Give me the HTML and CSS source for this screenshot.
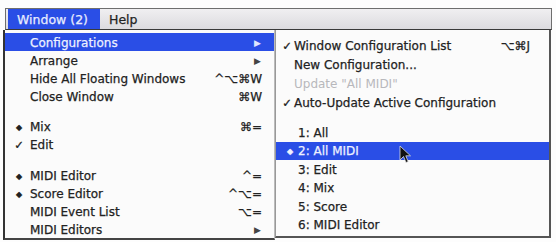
FILE: index.html
```html
<!DOCTYPE html>
<html>
<head>
<meta charset="utf-8">
<link rel="stylesheet" href="styles.css">
</head>
<body>
<div class="screen">
  <div class="bar">
    <span class="title active">Window (2)</span>
    <span class="title">Help</span>
  </div>
  <div class="menus">
    <div class="menu left">
      <div class="item hl"><span class="mark"></span><span class="label">Configurations</span><span class="key arrow">▶</span></div>
      <div class="item"><span class="mark"></span><span class="label">Arrange</span><span class="key arrow">▶</span></div>
      <div class="item"><span class="mark"></span><span class="label">Hide All Floating Windows</span><span class="key">^⌥⌘W</span></div>
      <div class="item"><span class="mark"></span><span class="label">Close Window</span><span class="key">⌘W</span></div>
      <div class="sep"></div>
      <div class="item"><span class="mark dia">◆</span><span class="label">Mix</span><span class="key">⌘=</span></div>
      <div class="item"><span class="mark">✓</span><span class="label">Edit</span><span class="key"></span></div>
      <div class="sep sep2"></div>
      <div class="item"><span class="mark dia">◆</span><span class="label">MIDI Editor</span><span class="key">^=</span></div>
      <div class="item"><span class="mark dia">◆</span><span class="label">Score Editor</span><span class="key">^⌥=</span></div>
      <div class="item"><span class="mark"></span><span class="label">MIDI Event List</span><span class="key">⌥=</span></div>
      <div class="item"><span class="mark"></span><span class="label">MIDI Editors</span><span class="key arrow">▶</span></div>
    </div>
    <div class="menu right">
      <div class="item tall"><span class="mark">✓</span><span class="label">Window Configuration List</span><span class="key">⌥⌘J</span></div>
      <div class="item tall"><span class="mark"></span><span class="label">New Configuration...</span><span class="key"></span></div>
      <div class="item tall dis"><span class="mark"></span><span class="label">Update "All MIDI"</span><span class="key"></span></div>
      <div class="item tall"><span class="mark">✓</span><span class="label">Auto-Update Active Configuration</span><span class="key"></span></div>
      <div class="sep"></div>
      <div class="item num"><span class="mark"></span><span class="label">1: All</span></div>
      <div class="item num hl"><span class="mark dia">◆</span><span class="label">2: All MIDI</span></div>
      <div class="item num"><span class="mark"></span><span class="label">3: Edit</span></div>
      <div class="item num"><span class="mark"></span><span class="label">4: Mix</span></div>
      <div class="item num"><span class="mark"></span><span class="label">5: Score</span></div>
      <div class="item num"><span class="mark"></span><span class="label">6: MIDI Editor</span></div>
    </div>
  </div>
  <svg class="cursor" width="14" height="20" viewBox="0 0 14 20"><path d="M1 1 L1 15 L4.5 11.5 L7 17.5 L9.2 16.6 L6.8 10.8 L11.5 10.8 Z" fill="#111" stroke="#ddd" stroke-width="0.8"/></svg>
</div>
</body>
</html>
```

FILE: styles.css
```css
html, body {
  margin: 0;
  padding: 0;
  background: #fdfdfd;
}
.screen {
  position: relative;
  width: 556px;
  height: 242px;
  overflow: hidden;
  font-family: "DejaVu Sans", "Liberation Sans", sans-serif;
  font-size: 12px;
  color: #222;
  -webkit-text-stroke: 0.25px currentColor;
}
.bar {
  margin: 8px 4px 0 5px;
  height: 20px;
  border: 1px solid #6e6e6e;
  border-bottom-color: #3a3a3a;
  background: linear-gradient(#f0eff1, #dcdbdf);
  display: flex;
  align-items: stretch;
  padding-left: 2px;
}
.title {
  display: flex;
  align-items: center;
  padding: 1px 9px 0 9px;
  font-size: 12.5px;
}
.title.active {
  background: #2a4ee6;
  color: #e8ecff;
  width: 74px;
}
.menus {
  display: flex;
  align-items: flex-start;
}
.menu {
  background: #fbfbfb;
  display: flex;
  flex-direction: column;
}
.menu.left {
  width: 269px;
  margin-left: 3px;
  border-left: 2px solid #333;
  border-right: 1px solid #bbb;
  border-bottom: 2px solid #444;
  padding-top: 3px;
}
.menu.right {
  width: 273px;
  border-right: 2px solid #555;
  border-bottom: 2px solid #555;
  border-left: 1px solid #999;
  padding-top: 6px;
  padding-bottom: 2px;
}
.item {
  display: flex;
  align-items: center;
  box-sizing: border-box;
  height: 18px;
  padding-top: 2px;
}
.left .item {
  padding-right: 12px;
}
.right .item {
  padding-right: 19px;
  padding-top: 1px;
}
.item.tall {
  height: 19px;
}
.item.num {
  height: 18.5px;
}
.mark {
  width: 22px;
  padding-left: 3px;
  font-size: 11.5px;
  text-align: center;
}
.right .mark {
  width: 14px;
  padding-left: 4px;
}
.right .num .mark {
  width: 16px;
  padding-left: 6px;
}
.mark.dia {
  font-size: 8px;
}
.label {
  flex: 1;
  white-space: nowrap;
}
.key {
  white-space: nowrap;
  text-align: right;
}
.key.arrow {
  font-size: 9px;
  color: #444;
  margin-right: 1px;
  -webkit-text-stroke: 0;
}
.hl {
  background: #2a4ee6;
  color: #eef1ff;
}
.hl .key.arrow {
  color: #e0e6ff;
}
.dis {
  color: #b8b8bc;
  -webkit-text-stroke: 0;
}
.sep {
  height: 12px;
}
.sep2 {
  height: 13px;
}
.right .sep {
  height: 11px;
}
.cursor {
  position: absolute;
  left: 399px;
  top: 145px;
}
```
